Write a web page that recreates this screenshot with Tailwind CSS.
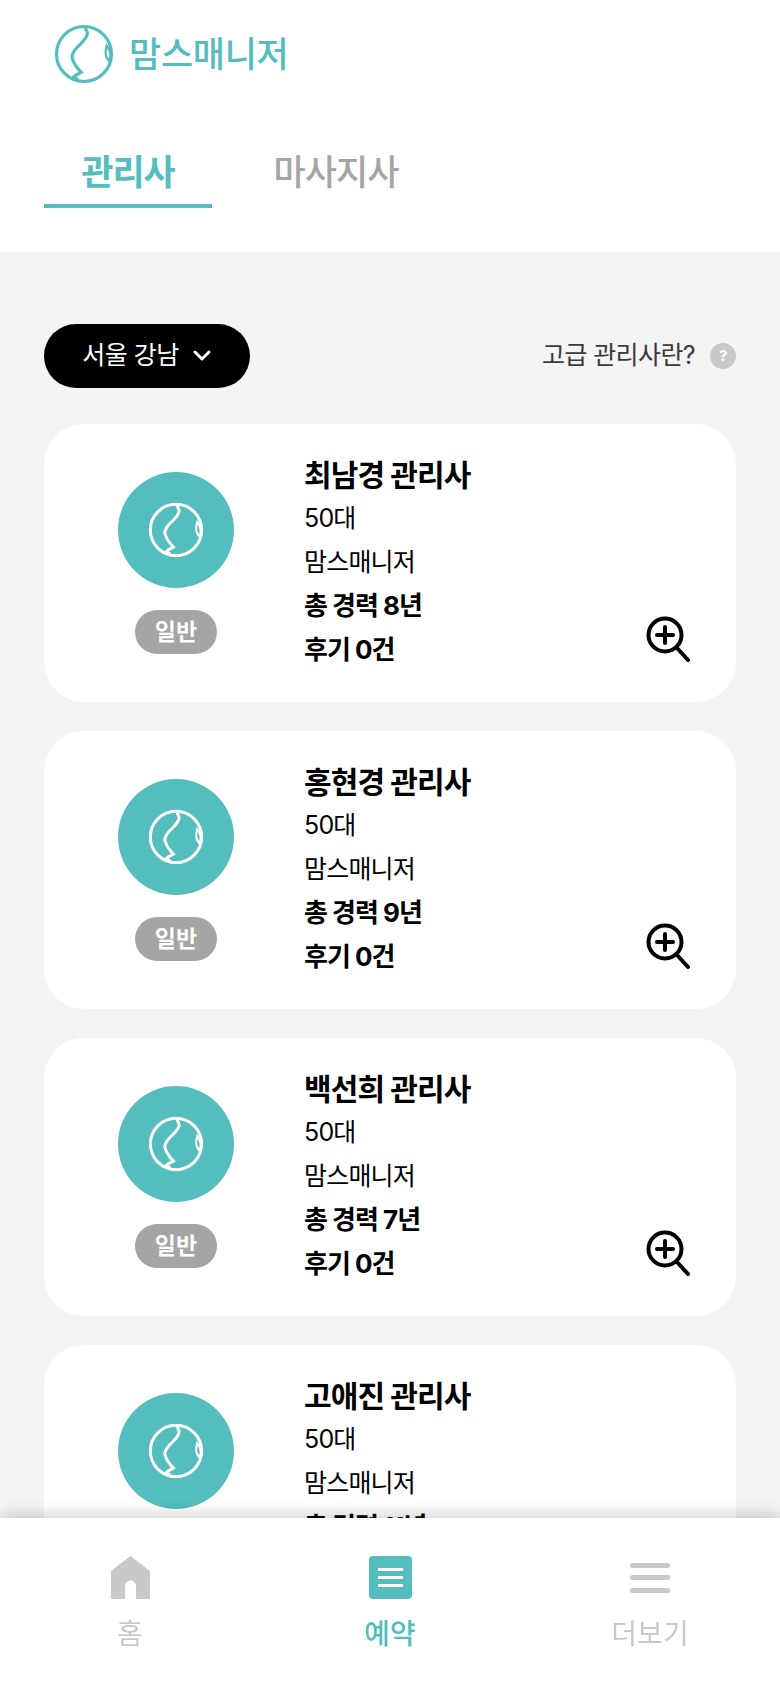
<!DOCTYPE html>
<html lang="ko">
<head>
  <meta charset="UTF-8" />
  <title>맘스매니저</title>
  <script src="https://cdn.jsdelivr.net/npm/@tailwindcss/browser@4"></script>
</head>
<body class="h-[1688px] overflow-hidden bg-[#f4f4f4] font-['Inter','Noto_Sans_CJK_KR',sans-serif] text-black">

  <svg class="hidden">
    <symbol id="logo" viewBox="-30 -30 60 60" fill="none" stroke="currentColor" stroke-width="3.2">
      <circle cx="0" cy="0" r="27.5" />
      <path d="M1.7 -27 C1 -24 4 -22 3.3 -20 C2 -14 -3 -11 -7 -6.5 C-11 -2 -13 2 -11.5 5 C-10 10 -6 15 -2.7 18.3 C-5 20 -8 20 -10.7 23.5 L-6 25.5" />
      <path d="M22.7 -8.5 C21 -3 21 3 25 7 C27.5 2 26 -4 22.7 -8.5 Z" stroke-width="2.2" />
    </symbol>
  </svg>

  <header class="bg-white h-[252px]">
    <div class="flex items-center h-[108px] pl-[54px] text-[#54bdbe]">
      <svg class="w-[60px] h-[60px]"><use href="#logo" /></svg>
      <span class="ml-[15px] text-[35px] font-medium tracking-[-0.3px]">맘스매니저</span>
    </div>
    <nav class="flex px-[44px] mt-[41px]">
      <div class="w-[168px] h-[59px] border-b-4 border-[#54bdbe] text-center text-[35px] leading-[46px] font-bold tracking-[-1px] text-[#54bdbe]">관리사</div>
      <div class="w-[168px] ml-[40px] text-center text-[35px] leading-[46px] font-medium tracking-[-1px] text-[#a5a5a5]">마사지사</div>
    </nav>
  </header>

  <main class="px-[44px] pt-[72px]">
    <div class="flex items-center justify-between h-[64px]">
      <button class="flex items-center justify-center gap-[13px] w-[206px] h-[64px] rounded-full bg-black text-white text-[25px] tracking-[-0.5px]">
        서울 강남
        <svg class="w-[20px] h-[14px]" viewBox="0 0 20 14" fill="none" stroke="currentColor" stroke-width="3" stroke-linecap="round" stroke-linejoin="round"><path d="M3 3 L10 10 L17 3" /></svg>
      </button>
      <div class="flex items-center gap-[15px] text-[25px] tracking-[-0.6px] text-[#3a3a3a]">
        고급 관리사란?
        <span class="flex items-center justify-center w-[26px] h-[26px] rounded-full bg-[#c9c9c9] text-white text-[15px] font-bold">?</span>
      </div>
    </div>
    <div id="cards" class="flex flex-col gap-[29px] mt-[36px]"></div>
  </main>

  <footer class="fixed inset-x-0 bottom-0 h-[170px] bg-white grid grid-cols-3 shadow-[0_-4px_14px_rgba(0,0,0,0.18)]">
    <div class="flex flex-col items-center pt-[38px] text-[#c9c9c9]">
      <svg class="w-[39px] h-[43px]" viewBox="0 0 39 43" fill="currentColor"><path d="M19.5 0 L39 15 V43 H25 V30 C25 23 14 23 14 30 V43 H0 V15 Z" /></svg>
      <span class="mt-[16px] text-[28px] leading-[38px]">홈</span>
    </div>
    <div class="flex flex-col items-center pt-[38px] text-[#54bdbe]">
      <div class="flex flex-col justify-center gap-[5px] w-[43px] h-[43px] px-[9px] rounded-[4px] bg-[#54bdbe]">
        <div class="h-[3px] bg-white"></div>
        <div class="h-[3px] bg-white"></div>
        <div class="h-[3px] bg-white"></div>
      </div>
      <span class="mt-[16px] text-[28px] leading-[38px] font-medium">예약</span>
    </div>
    <div class="flex flex-col items-center pt-[38px] text-[#c9c9c9]">
      <div class="flex flex-col justify-center gap-[7.5px] w-[40px] h-[43px]">
        <div class="h-[5px] rounded-full bg-[#c9c9c9]"></div>
        <div class="h-[5px] rounded-full bg-[#c9c9c9]"></div>
        <div class="h-[5px] rounded-full bg-[#c9c9c9]"></div>
      </div>
      <span class="mt-[16px] text-[28px] leading-[38px]">더보기</span>
    </div>
  </footer>

  <script>
    const managers = [
      ["최남경", 8],
      ["홍현경", 9],
      ["백선희", 7],
      ["고애진", 11],
    ];

    document.getElementById("cards").innerHTML = managers.map(m => `
      <article class="flex h-[278px] rounded-[40px] bg-white pl-[74px]">
        <div class="flex flex-col items-center w-[116px] pt-[48px]">
          <div class="flex items-center justify-center w-[116px] h-[116px] rounded-full bg-[#54bdbe] text-white">
            <svg class="w-[56px] h-[56px]"><use href="#logo" /></svg>
          </div>
          <span class="flex items-center justify-center w-[82px] h-[44px] mt-[22px] rounded-full bg-[#a5a5a5] text-white text-[23px] font-bold">일반</span>
        </div>
        <div class="ml-[70px] pt-[29px] text-[25px] tracking-[-0.8px]">
          <h3 class="text-[30px] leading-[44px] font-bold tracking-[-0.9px]">${m[0]} 관리사</h3>
          <p class="leading-[43px]">50대</p>
          <p class="leading-[44px]">맘스매니저</p>
          <p class="leading-[44px] font-bold text-[26px] tracking-[-1px]">총 경력 ${m[1]}년</p>
          <p class="leading-[43px] font-bold text-[26px] tracking-[-1px]">후기 0건</p>
        </div>
        <svg class="ml-auto mr-[46px] mt-[192px] w-[44px] h-[46px]" viewBox="0 0 44 46" fill="none" stroke="black" stroke-width="4" stroke-linecap="round">
          <circle cx="19" cy="19" r="16.5" />
          <path d="M19 11 V27 M11 19 H27" />
          <path d="M31 32 L42 44" />
        </svg>
      </article>
    `).join("");
  </script>
</body>
</html>
